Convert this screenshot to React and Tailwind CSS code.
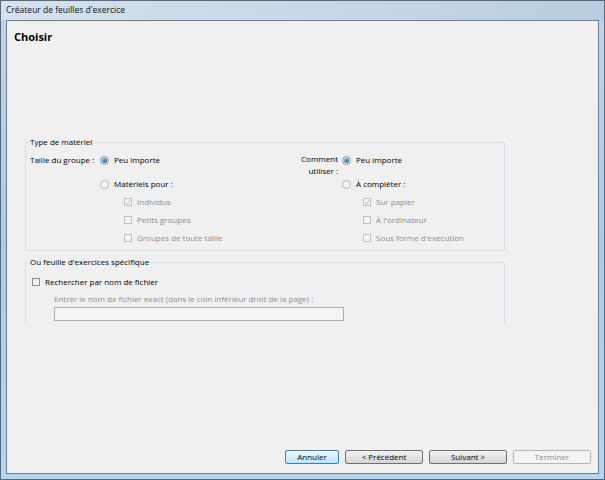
import React from 'react';

// Win7-style radio button
const Radio = ({ checked, disabled }) => (
    <span
        className={
            'inline-flex items-center justify-center w-[9px] h-[9px] rounded-full border shrink-0 ' +
            (disabled ? 'border-[#b4b4b4] bg-[#f4f4f4]' : 'border-[#8e8f8f] bg-gradient-to-br from-[#dcdcdc] to-[#ffffff]')
        }
    >
        {checked && <span className="w-[5px] h-[5px] rounded-full bg-gradient-to-br from-[#86c5ee] to-[#1b5a8c]" />}
    </span>
);

// Win7-style checkbox (mostly disabled in this picture)
const Check = ({ checked, disabled }) => (
    <span
        className={
            'inline-flex items-center justify-center w-[8px] h-[8px] border shrink-0 ' +
            (disabled ? 'border-[#c0c0c0] bg-[#f4f4f4]' : 'border-[#8e8f8f] bg-gradient-to-br from-[#e2e2e2] to-[#ffffff]')
        }
    >
        {checked && (
            <svg width="7" height="7" viewBox="0 0 7 7">
                <path d="M1 3.6 L2.8 5.4 L6 1.2" fill="none" stroke={disabled ? '#a8a8a8' : '#333'} strokeWidth="1" />
            </svg>
        )}
    </span>
);

const Option = ({ control, label, disabled, className = '' }) => (
    <div className={'flex items-center h-[18px] ' + className}>
        {control}
        <span className={'ml-[5px] ' + (disabled ? 'text-[#8d8d8d]' : 'text-black')}>{label}</span>
    </div>
);

const Button = ({ label, w, primary, disabled }) => (
    <div
        className={
            'h-[14px] flex items-center justify-center rounded-[2px] border ' + w + ' ' +
            (disabled
                ? 'border-[#b5b5b5] bg-[#f4f4f4] text-[#8d8d8d]'
                : primary
                ? 'border-[#3c7fb1] bg-gradient-to-b from-[#eaf6fd] to-[#bee6fd] text-black'
                : 'border-[#707070] bg-gradient-to-b from-[#f2f2f2] to-[#d5d5d5] text-black')
        }
    >
        {label}
    </div>
);

export default function App() {
    return (
        <div className="w-[605px] h-[480px] flex flex-col bg-gradient-to-b from-[#c3d5e8] via-[#a9cbea] to-[#b5d6f2] font-['Open_Sans','Noto_Sans',sans-serif] text-[8px] leading-none text-black border border-[#5b6878]">
            {/* Title bar */}
            <div className="h-[19px] shrink-0 flex items-center pl-[5px] text-[8.5px] text-[#111] bg-gradient-to-r from-[#d6e2ee] via-[#c8d8e8] to-[#b9cde0]">
                Créateur de feuilles d'exercice
            </div>

            {/* Client area */}
            <div className="flex-1 ml-[5px] mr-[5px] mb-[5px] border border-[#6b7b8b] bg-[#f0f0f0] flex flex-col">
                <div className="pt-[10px] pl-[7px] text-[11px] font-bold">Choisir</div>

                {/* Type de matériel */}
                <fieldset className="mt-[96px] ml-[18px] w-[480px] h-[113px] border border-[#d5dfe5] rounded-[2px]">
                    <legend className="ml-[3px] px-[1px] text-[8px]">Type de matériel</legend>
                    <div className="flex pl-[4px] pt-[5px]">
                        {/* Left column */}
                        <div className="flex w-[270px]">
                            <div className="w-[70px] h-[18px] flex items-center">Taille du groupe :</div>
                            <div className="flex flex-col">
                                <Option control={<Radio checked />} label="Peu importe" />
                                <Option control={<Radio disabled />} label="Matériels pour :" className="mt-[6px]" />
                                <div className="pl-[24px] flex flex-col">
                                    <Option control={<Check checked disabled />} label="Individus" disabled />
                                    <Option control={<Check disabled />} label="Petits groupes" disabled />
                                    <Option control={<Check disabled />} label="Groupes de toute taille" disabled />
                                </div>
                            </div>
                        </div>
                        {/* Right column */}
                        <div className="flex">
                            <div className="w-[38px] flex flex-col items-end pt-[2px] leading-[12px]">
                                <span>Comment</span>
                                <span>utiliser :</span>
                            </div>
                            <div className="flex flex-col ml-[4px]">
                                <Option control={<Radio checked />} label="Peu importe" />
                                <Option control={<Radio disabled />} label="À compléter :" className="mt-[6px]" />
                                <div className="pl-[21px] flex flex-col">
                                    <Option control={<Check checked disabled />} label="Sur papier" disabled />
                                    <Option control={<Check disabled />} label="À l'ordinateur" disabled />
                                    <Option control={<Check disabled />} label="Sous forme d'exécution" disabled />
                                </div>
                            </div>
                        </div>
                    </div>
                </fieldset>

                {/* Ou feuille d'exercices spécifique */}
                <fieldset className="mt-[7px] ml-[18px] w-[480px] h-[66px] border border-b-0 border-[#d5dfe5] rounded-t-[2px]">
                    <legend className="ml-[3px] px-[1px] text-[8px]">Ou feuille d'exercices spécifique</legend>
                    <div className="pl-[6px] pt-[7px] flex flex-col">
                        <Option control={<Check />} label="Rechercher par nom de fichier" />
                        <div className="pl-[22px] pt-[4px] text-[#8d8d8d]">
                            Entrer le nom de fichier exact (dans le coin inférieur droit de la page) :
                        </div>
                        <div className="ml-[22px] mt-[4px] w-[290px] h-[14px] border border-[#abadb3] bg-[#f4f4f4]" />
                    </div>
                </fieldset>

                <div className="flex-1" />

                {/* Buttons */}
                <div className="flex justify-end gap-[6px] pr-[7px] pb-[9px]">
                    <Button label="Annuler" w="w-[54px]" primary />
                    <Button label="< Précédent" w="w-[78px]" />
                    <Button label="Suivant >" w="w-[78px]" />
                    <Button label="Terminer" w="w-[78px]" disabled />
                </div>
            </div>
        </div>
    );
}
